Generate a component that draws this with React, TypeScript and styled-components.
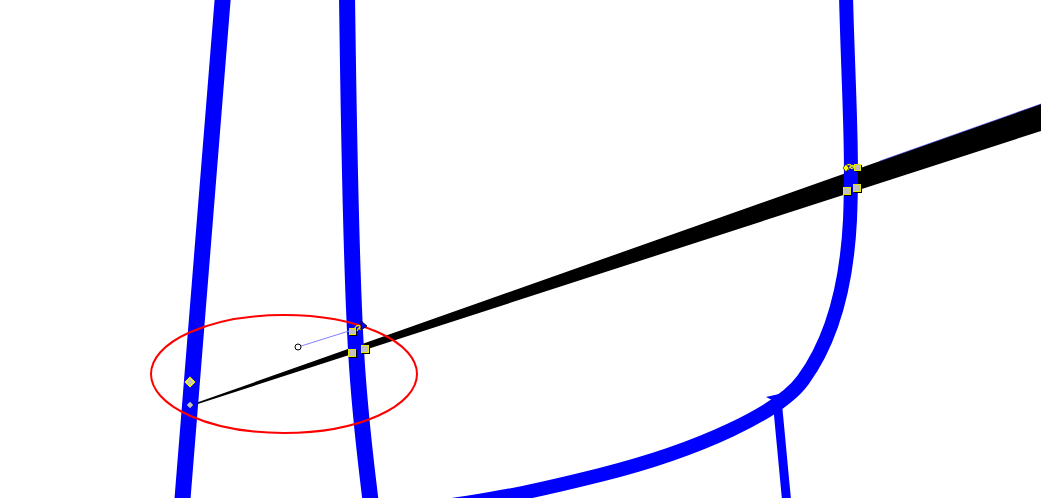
import React from 'react'
import { type ReactElement } from 'react'
import styled, { createGlobalStyle } from 'styled-components'

const GlobalStyle = createGlobalStyle`
html, body {
  margin: 0;
  padding: 0;
  background: #ffffff;
  overflow: hidden;
  font-family: 'DejaVu Sans', sans-serif;
}
`

const Canvas = styled.div`
width: 1041px;
height: 498px;
background: #ffffff;
overflow: hidden;
svg {
  display: block;
}
`

interface HandleProps { x: number, y: number, size?: number }

function SquareHandle ({ x, y, size = 8 }: HandleProps): ReactElement {
  const left = Math.round(x - size / 2) + 0.5
  const top = Math.round(y - size / 2) + 0.5
  return (
    <g shapeRendering="crispEdges">
      <rect x={left + 1} y={top + 1} width={size - 1} height={size - 1} fill="none" stroke="#000" strokeWidth={1} />
      <rect x={left} y={top} width={size - 1} height={size - 1} fill="#c0c0c0" stroke="#e8e800" strokeWidth={1} />
    </g>
  )
}

function DiamondHandle ({ x, y, size = 5, outline = true }: HandleProps & { outline?: boolean }): ReactElement {
  return (
    <polygon
      points={`${x},${y - size} ${x + size},${y} ${x},${y + size} ${x - size},${y}`}
      fill="#c4c4c4"
      stroke={outline ? '#ffff00' : '#a0a0a0'}
      strokeWidth={outline ? 1.3 : 0.8}
    />
  )
}

function RotateMarks ({ x, y }: { x: number, y: number }): ReactElement {
  return (
    <g fill="none" stroke="#e6e600" strokeWidth={1.3}>
      <path d={`M${x - 3},${y + 3} q2,-6 6,-4`} />
      <path d={`M${x},${y + 4} q2,-5 6,-4`} />
      <circle cx={x + 4} cy={y + 1} r={1.5} />
    </g>
  )
}

export default function App (): ReactElement {
  return (
    <Canvas>
      <GlobalStyle />
      <svg width="1041" height="498" viewBox="0 0 1041 498">
        {/* tapered black stroke */}
        <polygon points="190,405 1041,104 1041,131 190,406.5" fill="#000" />
        <line x1="880" y1="161" x2="1041" y2="104" stroke="#3030ff" strokeWidth={0.8} opacity={0.7} />

        {/* blue strokes */}
        <g fill="none" stroke="#0000ff" strokeLinecap="butt">
          <path d="M223,-5 L182,505" strokeWidth={16} />
          <path d="M347,-5 C349,150 352,280 356,350 S367,470 371,505" strokeWidth={16} />
          <path d="M846,-5 C848,80 853,150 850,220 C846,300 825,350 803,380 C780,412 700,450 600,475 S480,500 440,507" strokeWidth={14} />
          <path d="M777,399 L787,505" strokeWidth={9} />
        </g>
        <polygon points="766,397 779,394 778,403" fill="#0000ff" />

        {/* selection ellipse */}
        <ellipse cx="284" cy="374" rx="133" ry="59" fill="none" stroke="#ff0000" strokeWidth={2} />

        {/* node handles, left side */}
        <DiamondHandle x={190} y={382} size={4.5} />
        <DiamondHandle x={190} y={405} size={3} outline={false} />

        <line x1="298" y1="347" x2="352" y2="330" stroke="#8080ff" strokeWidth={1} />
        <circle cx="298" cy="347" r="3" fill="#fff" stroke="#000" strokeWidth={1} />
        <SquareHandle x={352} y={331} size={7} />
        <RotateMarks x={357} y={327} />
        <polygon points="361,321 367,326 361,330" fill="#0000ff" stroke="#000" strokeWidth={0.8} />
        <SquareHandle x={352} y={353} />
        <SquareHandle x={365} y={349} />

        {/* node handles, right side */}
        <RotateMarks x={848} y={166} />
        <polygon points="843,168 846,164 849,168 846,172" fill="#ffff00" stroke="#000" strokeWidth={0.6} />
        <SquareHandle x={857} y={167} size={7} />
        <SquareHandle x={847} y={191} />
        <SquareHandle x={857} y={188} />
      </svg>
    </Canvas>
  )
}
